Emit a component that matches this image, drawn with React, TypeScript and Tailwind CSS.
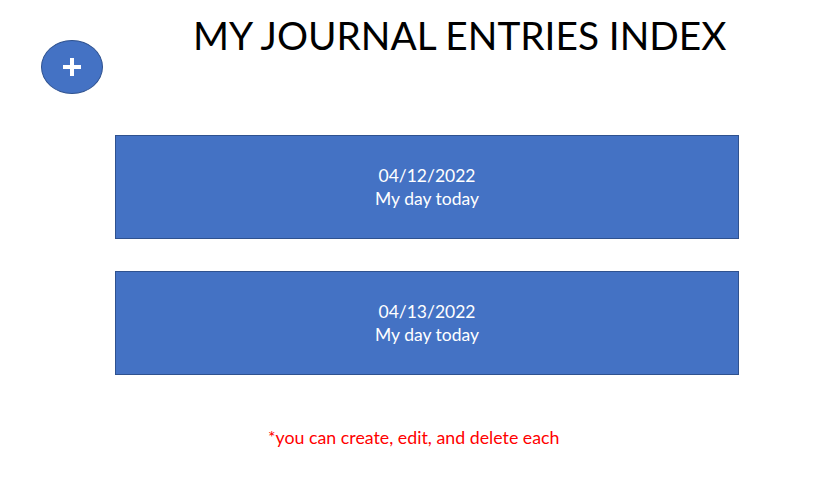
import React from "react";

const entries = [
  { date: "04/12/2022", title: "My day today" },
  { date: "04/13/2022", title: "My day today" },
];

export default function App() {
  return (
    <div className="w-[817px] h-[492px] bg-white overflow-hidden font-['Lato','Open_Sans',sans-serif]">
      <div className="flex items-start pt-[12px]">
        <button className="ml-[41px] mt-[28px] w-[62px] h-[54px] rounded-[50%] bg-[#4472C4] border border-[#2F528F] flex items-center justify-center">
          <svg width="20" height="20" viewBox="0 0 20 20">
            <rect x="8" y="1" width="4" height="18" fill="white" />
            <rect x="1" y="8" width="18" height="4" fill="white" />
          </svg>
        </button>
        <h1 className="ml-[90px] text-[38.8px] leading-[46px] text-black font-normal whitespace-nowrap">
          MY JOURNAL ENTRIES INDEX
        </h1>
      </div>
      <div className="ml-[115px] mt-[41px] flex flex-col gap-[32px] w-[624px]">
        {entries.map((e) => (
          <div
            key={e.date}
            className="h-[104px] bg-[#4472C4] border border-[#2F528F] flex flex-col items-center justify-center text-white text-[17.5px] leading-[23px]"
          >
            <div>{e.date}</div>
            <div>{e.title}</div>
          </div>
        ))}
      </div>
      <p className="ml-[268px] mt-[51px] text-[17.8px] leading-[22px] text-[#FF0000]">
        *you can create, edit, and delete each
      </p>
    </div>
  );
}
